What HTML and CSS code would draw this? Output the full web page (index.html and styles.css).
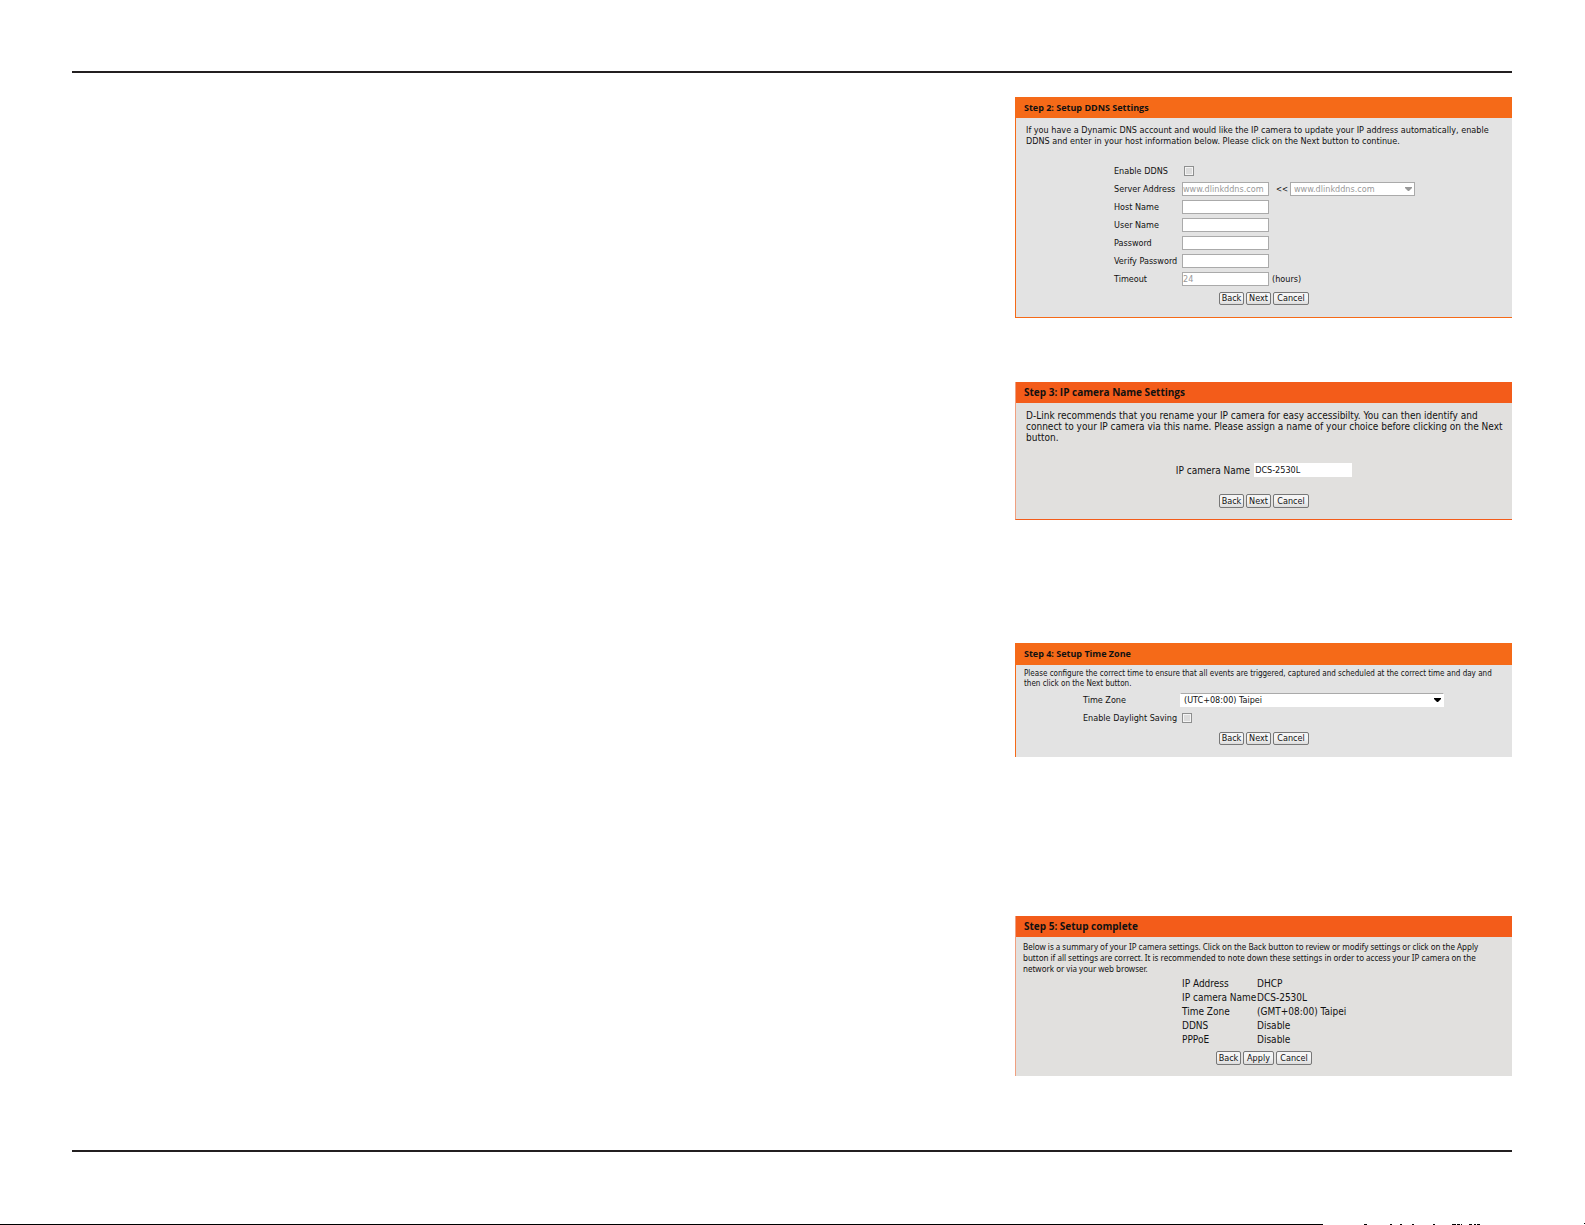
FILE: index.html
```html
<!DOCTYPE html>
<html lang="en">
<head>
    <meta charset="UTF-8">
    <meta name="viewport" content="width=device-width, initial-scale=1.0">
    <title>IP camera setup</title>
    <link rel="stylesheet" href="styles.css">
</head>
<body>
    <main class="page">
        <form class="panel ddns">
            <h2>Step 2: Setup DDNS Settings</h2>
            <p>If you have a Dynamic DNS account and would like the IP camera to update your IP address automatically, enable<br>DDNS and enter in your host information below. Please click on the Next button to continue.</p>
            <div class="fields">
                <div class="row">
                    <label for="enable-ddns">Enable DDNS</label>
                    <input type="checkbox" id="enable-ddns">
                </div>
                <div class="row">
                    <label for="server">Server Address</label>
                    <input type="text" id="server" value="www.dlinkddns.com" disabled>
                    <span class="arrows">&lt;&lt;</span>
                    <div class="select-box disabled">
                        <select aria-label="Server list" disabled>
                            <option>www.dlinkddns.com</option>
                        </select>
                        <svg width="7" height="4" viewBox="0 0 7 4"><path d="M0 0h7v1L4 4H3L0 1z"/></svg>
                    </div>
                </div>
                <div class="row">
                    <label for="host">Host Name</label>
                    <input type="text" id="host">
                </div>
                <div class="row">
                    <label for="user">User Name</label>
                    <input type="text" id="user">
                </div>
                <div class="row">
                    <label for="password">Password</label>
                    <input type="password" id="password">
                </div>
                <div class="row">
                    <label for="verify">Verify Password</label>
                    <input type="password" id="verify">
                </div>
                <div class="row">
                    <label for="timeout">Timeout</label>
                    <input type="text" id="timeout" value="24" disabled>
                    <span class="unit">(hours)</span>
                </div>
            </div>
            <div class="buttons">
                <button type="button">Back</button>
                <button type="button">Next</button>
                <button type="button">Cancel</button>
            </div>
        </form>

        <form class="panel alt camera">
            <h2>Step 3: IP camera Name Settings</h2>
            <p>D-Link recommends that you rename your IP camera for easy accessibilty. You can then identify and<br>connect to your IP camera via this name. Please assign a name of your choice before clicking on the Next<br>button.</p>
            <div class="row">
                <label for="camera-name">IP camera Name</label>
                <input type="text" id="camera-name" value="DCS-2530L">
            </div>
            <div class="buttons">
                <button type="button">Back</button>
                <button type="button">Next</button>
                <button type="button">Cancel</button>
            </div>
        </form>

        <form class="panel timezone">
            <h2>Step 4: Setup Time Zone</h2>
            <p>Please configure the correct time to ensure that all events are triggered, captured and scheduled at the correct time and day and<br>then click on the Next button.</p>
            <div class="fields">
                <div class="row">
                    <label for="zone">Time Zone</label>
                    <div class="select-box">
                        <select id="zone">
                            <option>(UTC+08:00) Taipei</option>
                        </select>
                        <svg width="7" height="4" viewBox="0 0 7 4"><path d="M0 0h7v1L4 4H3L0 1z"/></svg>
                    </div>
                </div>
                <div class="row">
                    <label for="daylight">Enable Daylight Saving</label>
                    <input type="checkbox" id="daylight">
                </div>
            </div>
            <div class="buttons">
                <button type="button">Back</button>
                <button type="button">Next</button>
                <button type="button">Cancel</button>
            </div>
        </form>

        <form class="panel alt complete">
            <h2>Step 5: Setup complete</h2>
            <p>Below is a summary of your IP camera settings. Click on the Back button to review or modify settings or click on the Apply<br>button if all settings are correct. It is recommended to note down these settings in order to access your IP camera on the<br>network or via your web browser.</p>
            <table>
                <tr><th>IP Address</th><td>DHCP</td></tr>
                <tr><th>IP camera Name</th><td>DCS-2530L</td></tr>
                <tr><th>Time Zone</th><td>(GMT+08:00) Taipei</td></tr>
                <tr><th>DDNS</th><td>Disable</td></tr>
                <tr><th>PPPoE</th><td>Disable</td></tr>
            </table>
            <div class="buttons">
                <button type="button">Back</button>
                <button type="button">Apply</button>
                <button type="button">Cancel</button>
            </div>
        </form>
    </main>
    <div class="bottom-line">
        <svg width="262" height="2" viewBox="0 0 262 2">
            <path d="M41 1h3v1h-3zM67 1h2v1h-2zM77 1h2v1h-2zM89 1h2v1h-2zM110 1h2v1h-2zM129 1h4v1h-4zM134 1h3v1h-3zM138 1h1v1h-1zM146 1h3v1h-3zM151 1h2v1h-2zM154 1h3v1h-3zM261 0h1v1h-1z"/>
        </svg>
    </div>
</body>
</html>
```
FILE: styles.css
```css
* {
    box-sizing: border-box;
}
body {
    margin: 0;
    min-height: 100vh;
    display: flex;
    flex-direction: column;
    background-color: #fff;
    color: #111;
    font-family: "DejaVu Sans Condensed", Tahoma, sans-serif;
    font-size: 9px;
    line-height: 11px;
}
.page {
    display: flex;
    flex-direction: column;
    align-items: flex-end;
    margin: 71px 73px 0 72px;
    padding: 24px 0 74px;
    border-top: 2px solid #231f20;
    border-bottom: 2px solid #231f20;
}
.panel {
    width: 497px;
    max-width: 100%;
    background-color: #e3e3e3;
    border-left: 1px solid #f56a18;
    border-bottom: 1px solid #f56a18;
    white-space: nowrap;
}
.panel h2 {
    margin: 0;
    padding-left: 8px;
    background-color: #f56a18;
    font-family: "Open Sans", Tahoma, sans-serif;
    font-size: 9px;
    font-weight: bold;
    line-height: 21px;
}
.panel p {
    margin: 0;
    padding: 7px 0 0 10px;
}
.alt {
    background-color: #e1e0de;
    border-left-color: #f0a080;
    border-bottom-color: #f35c1a;
}
.alt h2 {
    background-color: #f35c1a;
    font-size: 10px;
}
.row {
    display: flex;
    align-items: center;
    height: 18px;
}
input,
select,
button {
    margin: 0;
    font: inherit;
    color: inherit;
}
input[type="text"],
input[type="password"] {
    width: 87px;
    height: 14px;
    padding: 0;
    border: 1px solid #aaa;
    background-color: #fff;
}
input:disabled,
select:disabled {
    color: #999;
    opacity: 1;
}
input[type="checkbox"] {
    appearance: none;
    width: 10px;
    height: 10px;
    margin-left: 2px;
    border: 1px solid #8e8f8f;
    background-color: #dcdcdc;
    box-shadow: inset 0 0 0 1px #f4f4f4;
}
.select-box {
    position: relative;
    display: flex;
}
.select-box select {
    appearance: none;
    width: 100%;
    height: 14px;
    padding: 0 3px;
    border: 1px solid #fff;
    border-top-color: #aaa;
    border-radius: 0;
    background-color: #fff;
    opacity: 1;
}
.select-box svg {
    position: absolute;
    top: 5px;
    right: 3px;
    pointer-events: none;
}
.disabled select {
    border-color: #aaa;
}
.disabled svg {
    fill: #999;
}
.buttons {
    display: flex;
    justify-content: center;
    gap: 2px;
}
.buttons button {
    width: 25px;
    height: 13px;
    padding: 0;
    border: 1px solid #777;
    border-radius: 2px;
    background: linear-gradient(#f4f4f4 50%, #dcdcdc);
    line-height: 11px;
}
.buttons button:last-child {
    width: 36px;
}

.ddns {
    height: 221px;
}
.ddns .fields {
    margin: 15px 0 0 98px;
}
.ddns label {
    width: 68px;
}
.arrows {
    width: 21px;
    padding-left: 7px;
    font-size: 8px;
}
.ddns .select-box {
    width: 125px;
}
.unit {
    margin-left: 3px;
}
.ddns .buttons {
    margin-top: 4px;
}

.camera {
    height: 138px;
    margin-top: 64px;
}
.camera p,
.camera label {
    font-size: 10px;
}
.camera .row {
    justify-content: center;
    gap: 4px;
    margin-top: 18px;
}
.camera .row input {
    width: 98px;
    border-color: #fff;
}
.camera .buttons {
    margin-top: 15px;
}
.alt .buttons button {
    height: 14px;
}

.timezone {
    height: 114px;
    margin-top: 123px;
    border-bottom: 0;
}
.timezone h2 {
    line-height: 22px;
}
.timezone p {
    padding: 4px 0 0 8px;
    font-size: 8px;
    line-height: 10px;
}
.timezone .fields {
    margin: 2px 0 0 67px;
}
.timezone label {
    width: 97px;
}
.timezone .select-box {
    width: 264px;
}
.timezone .buttons {
    margin-top: 5px;
}

.complete {
    height: 160px;
    margin-top: 159px;
    border-bottom: 0;
}
.complete p {
    padding: 4px 0 0 7px;
    font-family: "Noto Sans", Tahoma, sans-serif;
    font-size: 8px;
}
.complete table {
    margin: 2px 0 0 166px;
    border-collapse: collapse;
    font-size: 10px;
}
.complete th,
.complete td {
    height: 14px;
    padding: 0;
    font-weight: normal;
    text-align: left;
}
.complete th {
    width: 75px;
}
.complete .buttons {
    margin-top: 5px;
}
.complete .buttons button:nth-child(2) {
    width: 31px;
}

.bottom-line {
    display: flex;
    align-items: flex-end;
    margin-top: auto;
    height: 2px;
}
.bottom-line::before {
    content: "";
    width: 1323px;
    height: 1px;
    background-color: #000;
}
```
